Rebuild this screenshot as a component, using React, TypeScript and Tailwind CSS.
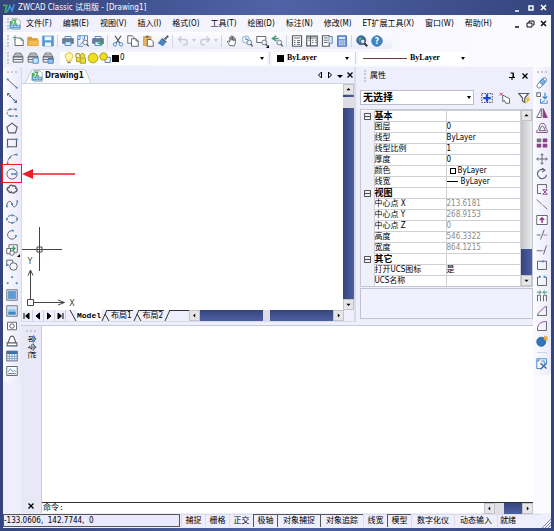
import type { ReactNode } from "react";

const INK = "#575b62";
const BLUE = "#3f86c6";

function Icon({ children, className = "size-3" }: { children: ReactNode; className?: string }) {
  return (
    <svg viewBox="0 0 16 16" className={`${className} shrink-0`} fill="none" stroke={INK} strokeWidth="1.2" aria-hidden="true">
      {children}
    </svg>
  );
}

const dot = (x: number, y: number) => <rect key={`${x}-${y}`} x={x - 1} y={y - 1} width="2.4" height="2.4" fill={BLUE} stroke="none" />;

const printer = (
  <>
    <path d="M4 5V2h8v3" fill="#fff" stroke={BLUE} />
    <rect x="1" y="5" width="14" height="6" fill="#6b7d90" stroke="#5a6c80" />
    <path d="M4 9h8v5H4z" fill="#dcecf9" stroke={BLUE} />
  </>
);

const magnifier = (
  <>
    <circle cx="11" cy="10" r="3.2" fill="#e8f2fb" stroke="#6a7683" />
    <path d="M13.2 12.4 15.5 15" stroke="#555" strokeWidth="1.8" />
  </>
);

const layerStack = (
  <>
    <path d="M4.500 1.500h7l3 5h-13z" fill="#fff" />
    <path d="M4 4h8" />
    <path d="M1.500 6.500h13M1.500 6.500v7h13v-7M1.500 10h13" />
  </>
);

type Tool = { label: string; art: ReactNode; menu?: boolean };

const fileTools: Tool[] = [
  { label: "新建", art: <><path d="M4 5v9h11V7l-3-3H7" fill="#fff" /><path d="M12 4v3h3M1 3.500h6M4 .5v6" stroke="#3d9a6c" /></> },
  { label: "打开", art: <><path d="M1 14V3h5l1.500 2H14v9z" fill="#e0a030" stroke="#d99a2b" /><path d="M1 14l1-7h13v7z" fill="#f3bd55" stroke="#e3a63b" /></> },
  { label: "保存", art: <><path d="M1 1.500h14v13H1z" fill="#5b9ad4" stroke="#4b8bc8" /><path d="M3.500 2h9v5h-9zM4 10h8v4.500H4z" fill="#eef6fd" stroke="none" /></> },
];
const printTools: Tool[] = [
  { label: "打印", art: printer },
  { label: "打印预览", art: <><path d="M1 1h13v9M1 1v14h7M4 1v5H1M7 4l3 3-6 6M10 1v5" stroke={BLUE} fill="none" />{magnifier}</> },
  { label: "发布", art: <>{printer}<path d="M8 11h5M11 8l3.500 3-3.500 3" stroke="#3d9a6c" strokeWidth="2" /></> },
];
const editTools: Tool[] = [
  { label: "剪切", art: <><path d="M4 1l6.500 10M12 1 5.500 11" strokeWidth="1.700" /><circle cx="4" cy="12.500" r="2.300" stroke={BLUE} /><circle cx="12" cy="12.500" r="2.300" stroke={BLUE} /></> },
  { label: "复制", art: <><path d="M1 1h6l2 2v8H1z" fill="#fff" /><path d="M6 5h6l3 3v7H6z" fill="#fff" /><path d="M12 5v3h3" /></> },
  { label: "粘贴", art: <><path d="M2 2h10v12H2z" fill="#eab45a" stroke="#dda246" /><path d="M5 .8h4v3H5z" fill="#777" stroke="none" /><path d="M7 6h5l3 3v6H7z" fill="#fff" /></> },
  { label: "特性匹配", art: <><path d="M15 1 10 6" strokeWidth="2.500" stroke="#56697d" /><path d="m7 4 6 5-2 2-6-5z" fill="#56697d" stroke="none" /><path d="m5 6 6 5-3 4-7-4z" fill={BLUE} stroke="none" /></> },
];
const viewTools: Tool[] = [
  { label: "实时平移", art: <path d="M5 14c-1-2-3-4-3-5.500 1-1 2 0 3 1V3.500c0-1.300 1.800-1.300 1.800 0V7 2c0-1.300 1.900-1.300 1.900 0v5-4c0-1.300 1.900-1.300 1.900 0v5-3c0-1.300 1.900-1 1.900.3V10c0 2-1 3-1.500 4.500z" fill="#fff" /> },
  { label: "实时缩放", art: <><circle cx="6.500" cy="6" r="4.800" fill="#eef6fc" stroke="#7faed6" /><path d="M6.500 3v3h3" stroke={BLUE} />{magnifier}</> },
  { label: "窗口缩放", art: <><path d="M1 2h12v8H1z" fill="#fff" />{magnifier}</>, menu: true },
  { label: "缩放上一个", art: <><path d="M7 1 2 4.500 7 8M2 4.500h8" stroke="#3d9a6c" strokeWidth="2" />{magnifier}</> },
];
const paletteTools: Tool[] = [
  { label: "特性", art: <><path d="M2 1h12v14H2z" fill="#fff" strokeWidth="1.600" /><path d="M4 4h8M4 7.500h2M8 7.500h4M4 10h2M8 10h4M4 12.500h2M8 12.500h4" /></> },
  { label: "设计中心", art: <><path d="M1 1.500h14v13H1zM6 1.500v13" fill="#fff" strokeWidth="1.600" /><path d="M2 4h12M8 7h2M12 7h2M8 10h2M12 10h2M3 7h2" /></> },
  { label: "工具选项板", art: <><path d="M2 1h9v14H2z" fill="#fff" strokeWidth="1.600" /><path d="M11 2h4v9h-4" fill="#dcecf9" stroke={BLUE} /><path d="M4 4h5M4 7h5M4 10h5" /></> },
  { label: "计算器", art: <><path d="M2 1h12v14H2z" fill="#6f95d8" stroke="#4d74bd" /><path d="M4 4h8" stroke="#fff" strokeWidth="2" /><path d="M4 8h8M4 10.500h8M4 13h8" stroke="#fff" strokeDasharray="2 1" /></> },
];
const helpTools: Tool[] = [
  { label: "在线搜索", art: <><circle cx="7" cy="7" r="6" fill="#2f75b8" stroke="#3a5f8c" /><path d="M3 4l4-1 1 3-4 3z" fill="#5cb36b" stroke="none" /><circle cx="9" cy="8.500" r="3" fill="#dcecf9" stroke="#556" /><path d="m11 11 4 4" stroke="#333" strokeWidth="2.500" /></> },
  {
    label: "帮助",
    art: <><circle cx="8" cy="8" r="7" fill="#3f86c6" stroke="#3577b5" /><text x="8" y="12" textAnchor="middle" fill="#fff" stroke="none" className="text-[11px] font-bold">?</text></>,
  },
];

const layerTools: Tool[] = [
  { label: "图层特性", art: layerStack },
  { label: "图层状态", art: <>{layerStack}<path d="M8 8h7v7H8z" fill="#cfe4f7" stroke={BLUE} /></> },
  { label: "上一图层", art: <>{layerStack}<path d="M8 9h7v6H8z" fill="#9fc4e6" stroke={BLUE} /><path d="M8 9h7" stroke="#3a6fa8" strokeWidth="2" /></> },
];

const drawTools: Tool[] = [
  { label: "直线", art: <><path d="M2 3l12 11" />{dot(2, 3)}{dot(14, 14)}</> },
  { label: "构造线", art: <><path d="M2 2l12 12M2 5V2h3M14 11v3h-3" />{dot(5, 5)}{dot(11, 11)}</> },
  { label: "多段线", art: <><path d="M13 3H6C0 3 0 12 6 12h8" strokeDasharray="3 1.500" />{dot(13, 3)}{dot(5, 3)}{dot(6, 12)}{dot(14, 12)}</> },
  { label: "正多边形", art: <path d="M8 1.500 15 7l-2.500 7.500h-9L1 7z" strokeWidth="1.500" /> },
  { label: "矩形", art: <><path d="M2 3h12v10H2z" strokeWidth="1.500" />{dot(2, 13)}{dot(14, 3)}</> },
  { label: "圆弧", art: <><path d="M14 2C7 2 2 7 2 14" strokeDasharray="4 1.500" />{dot(14, 2)}{dot(5, 6)}{dot(2, 14)}</> },
  { label: "圆", art: <><circle cx="8" cy="8" r="6.800" /><path d="M8 8h6" stroke={BLUE} />{dot(8, 8)}{dot(12, 8)}</> },
  { label: "修订云线", art: <path d="M4 11c-4-1-3-5 0-5 0-3 4-4 5-2 3-1 5 1 4 3 3 1 2 5-1 5-1 2-4 2-5 0-1 1-3 1-3-1z" strokeWidth="1.800" /> },
  { label: "样条曲线", art: <><path d="M1 11C1 3 7 3 8 8s6 6 7-3" />{dot(1, 11)}{dot(8, 8)}{dot(15, 4)}</> },
  { label: "椭圆", art: <><ellipse cx="8" cy="8" rx="7" ry="5" strokeDasharray="4 1.500" />{dot(8, 3)}{dot(1, 8)}{dot(15, 8)}{dot(8, 13)}</> },
  { label: "椭圆弧", art: <><path d="M9 2C0 2 0 13 8 13.500c3 0 5-2 5-4" />{dot(9, 2)}{dot(13, 9)}</> },
  { label: "插入块", art: <><path d="M4 1h11v10H4z" fill="#fff" /><path d="M6 6h6M9 3l3 3-3 3" stroke="#3d9a6c" strokeWidth="1.800" /><path d="M1 6h5v7H1z" fill="#fff" /><circle cx="8" cy="12" r="3" fill="#fff" /></>, menu: true },
  { label: "创建块", art: <><path d="M1 8V1.500h8V5M1 8h3" /><circle cx="10" cy="10" r="5" fill="#f4f4fc" />{dot(1, 8)}</> },
  { label: "点", art: <>{dot(8, 4)}{dot(2, 12)}{dot(14, 12)}</> },
  { label: "图案填充", art: <><path d="M1 1h14v14H1z" fill="#e6eef6" stroke="#667" /><path d="M3 3h10v10H3z" fill="#5f9bd0" stroke="#3f7fb8" strokeDasharray="1 1" /></> },
  { label: "渐变色", art: <><path d="M1 1h14v14H1z" fill="#e6eef6" stroke="#667" /><path d="M3 3h10v3H3z" fill="#cfe3f5" stroke="none" /><path d="M3 6h10v3H3z" fill="#8fbce2" stroke="none" /><path d="M3 9h10v4H3z" fill="#3f86c6" stroke="none" /></> },
  { label: "面域", art: <><path d="M2 3h12v10H2z" fill="#fff" /><circle cx="8" cy="8" r="3" /></> },
  { label: "区域覆盖", art: <path d="M3 10 5.500 3C6 1 10 1 10.500 3L13 10M1.500 10.500h13v4h-13z" fill="#fff" strokeWidth="1.400" /> },
  { label: "表格", art: <><path d="M1 1.500h14v13H1z" fill="#fff" /><path d="M1 1.500h14v4H1z" fill="#3a6fa8" stroke="none" /><path d="M1 8.500h14M1 11.500h14M4.500 5v9.500M8 5v9.500M11.500 5v9.500" stroke="#6d9ccc" /></> },
  { label: "图像", art: <><path d="M1 2h14v12H1z" fill="#fff" /><path d="m3 9 3-4 3 4 2-2 2 2" stroke={BLUE} /><path d="M3 11.500h10" /></> },
];

const PLUM = "#8a3f87";
const modifyTools: Tool[] = [
  { label: "删除", art: <><path d="M9 2c3-3 7 1 4 4l-7 8c-3 2-6-1-4-4z" fill="#fff" stroke="#56697d" /><path d="m5 7 4 4 4-5-4-4z" fill="#7fb2de" stroke={BLUE} /></> },
  { label: "复制对象", art: <><path d="M1 1h5v5H1z" /><path d="M12 1v7M9 6l3 3 3-3" stroke={BLUE} strokeWidth="1.600" /><path d="M6 9v6h9v-4M6 15l6-4" stroke={BLUE} /></> },
  { label: "镜像", art: <><path d="M7 2v12H1z" fill="#fff" /><path d="M9.500 2v12H15z" fill={PLUM} stroke={PLUM} /></> },
  { label: "偏移", art: <><path d="M1 14c-1-4 3-3 3-6 0-8 9-8 9-1 0 2 3 4 2 7z" stroke={PLUM} /><path d="M4 11.500c3-1 1-6 4.500-6s1.500 5 4.500 6z" /></> },
  { label: "阵列", art: <><path d="M1 2h6v5H1z" fill="#777" stroke="none" /><path d="M9 2h6v5H9zM1 9h6v5H1zM9 9h6v5H9z" fill={PLUM} stroke="none" /></> },
  { label: "移动", art: <path d="M8 1v14M1 8h14M6 3l2-2 2 2M6 13l2 2 2-2M3 6 1 8l2 2M13 6l2 2-2 2" /> },
  { label: "旋转", art: <path d="M11 2.500C5 0 0 6 3 11s10 4 11-2M8 0l4 3-4 2.500" strokeWidth="1.400" /> },
  { label: "缩放", art: <><path d="M14 7V2H2v12h5" /><path d="M9 9h6M9 9l6 6M15 9l-6 6h6" stroke={PLUM} /></> },
  { label: "拉伸", art: <><path d="M1 2l4 4M11 11l4 4" /><path d="m5 6 6 5" stroke={PLUM} strokeDasharray="2 1" /></> },
  { label: "拉长", art: <><path d="M1 2h14v12H1z" fill="#fff" /><path d="M8 12V5M5 8l3-3 3 3" stroke={PLUM} strokeWidth="2" /></> },
  { label: "修剪", art: <><path d="M1 8h5M6 14l5-13" /><path d="M10 8h5" stroke={PLUM} strokeDasharray="2 1" /></> },
  { label: "延伸", art: <><path d="M1 9h6M10 14l4-12" /><path d="M7 9h5" stroke={PLUM} strokeDasharray="2 1" /></> },
  { label: "打断于点", art: <><path d="M2 3h12v11H2z" />{dot(9, 3)}</> },
  { label: "打断", art: <><path d="M5 3H2v11h12V3h-3" />{dot(5, 2)}{dot(11, 2)}</> },
  { label: "合并", art: <><path d="M2 15V7h4v8M10 15V7h4v8" /><path d="M1 3h5M4 1l3 2-3 2M15 3h-5M12 1 9 3l3 2" stroke="#3d9a6c" /></> },
  { label: "倒角", art: <><path d="M14 2v12H2l1-3" /><path d="m3 11 8-8 3-1" stroke={PLUM} /></> },
  { label: "圆角", art: <><path d="M14 2v12H2v-2" /><path d="M2 12C2 6 6 2 14 2" stroke={PLUM} /></> },
  { label: "分解", art: <><circle cx="7" cy="9" r="6" fill="#2f75b8" stroke="#29669f" /><path d="m12 1 1 2 2-1-1 3 2 1-3 1-2-1z" fill="#eda92c" stroke="#eda92c" /></> },
];

const matchTool: Tool = {
  label: "快速选择",
  art: <><path d="M1 1h13v7M1 1v13h6M4 1v3H1M7 4h4v4" stroke={BLUE} /><path d="m6 7 8 7M14 7l-8 8" stroke="#3a6fa8" strokeWidth="2" /></>,
};

function ToolButton({ tool, className = "" }: { tool: Tool; className?: string }) {
  return (
    <button type="button" aria-label={tool.label} className={`relative flex size-[15px] shrink-0 items-center justify-center ${className}`}>
      <Icon>{tool.art}</Icon>
      {tool.menu && <span className="absolute right-0 bottom-0 border-b-[3px] border-l-[3px] border-b-black border-l-transparent" />}
    </button>
  );
}

function Separator() {
  return <span className="mx-[2px] h-3 w-px shrink-0 bg-[#d4d4e2]" />;
}

function Grip({ vertical = false }: { vertical?: boolean }) {
  return vertical ? (
    <span className="h-3 w-0 shrink-0 border-l-2 border-dotted border-[#c8c8d2]" />
  ) : (
    <span className="h-0 w-[10px] shrink-0 border-t-2 border-dotted border-[#c8c8d2]" />
  );
}

function Caret({ muted = false }: { muted?: boolean }) {
  return (
    <span
      className={`pointer-events-none h-0 w-0 shrink-0 border-x-2 border-t-[3px] border-x-transparent ${muted ? "border-t-[#c9c9d4]" : "border-t-black"}`}
    />
  );
}

function Combo({ label, value, lead, className, textClass }: { label: string; value: string; lead?: ReactNode; className: string; textClass: string }) {
  return (
    <div className={`flex items-center bg-white ${className}`}>
      {lead}
      <select aria-label={label} className={`min-w-0 flex-1 appearance-none bg-transparent outline-none ${textClass}`}>
        <option>{value}</option>
      </select>
      <Caret />
    </div>
  );
}

function Undo({ flip = false }: { flip?: boolean }) {
  return (
    <span className="flex items-center">
      <button type="button" aria-label={flip ? "重做" : "放弃"} className="flex size-[15px] items-center justify-center">
        <Icon className={flip ? "size-3 -scale-x-100" : "size-3"}>
          <path d="M6 2 2 6l4 4M2 6h8c5 0 5 7 0 7H8" stroke="#c9ccd8" strokeWidth="2" />
        </Icon>
      </button>
      <span className="flex w-[7px] justify-center"><Caret muted /></span>
    </span>
  );
}

type Dir = "up" | "down" | "left" | "right";
const arrowPath: Record<Dir, string> = { up: "M2 6 5 3l3 3z", down: "M2 4l3 3 3-3z", left: "M6 2 3 5l3 3z", right: "M4 2l3 3-3 3z" };

function ScrollButton({ dir, label }: { dir: Dir; label: string }) {
  return (
    <button type="button" aria-label={label} className="flex size-[11px] shrink-0 items-center justify-center border border-[#c4c4c8] bg-[#e6e6e8]">
      <svg viewBox="0 0 10 10" className="size-[7px]"><path d={arrowPath[dir]} /></svg>
    </button>
  );
}

const trackV = "bg-linear-to-r from-[#35457c] to-[#4d60a4]";
const trackH = "bg-linear-to-b from-[#35457c] to-[#4d60a4]";

function Logo({ className }: { className: string }) {
  return (
    <svg viewBox="0 0 16 16" className={`${className} shrink-0`} fill="none" aria-hidden="true">
      <path d="M0 4.500h5L3 13h3" stroke="#3fae5a" strokeWidth="2.400" />
      <path d="m6 13 3-8 3 7 3-9" stroke="#3d9be0" strokeWidth="2" />
    </svg>
  );
}

function DocIcon() {
  return (
    <svg viewBox="0 0 16 16" className="size-3 shrink-0" fill="none" aria-hidden="true">
      <path d="M4 1h8l3 3v11H4z" fill="#fff" stroke="#8a95a5" />
      <path d="M5 3h4L7 8h4" stroke="#4cb04f" strokeWidth="2" />
      <path d="M2 4v10M2 8l3-3" stroke="#3fae5a" strokeWidth="2" />
      <path d="M1 9h14v5H1z" fill="#4d94cf" />
      <path d="M3 12.500v-2h2v2M7 12.500v-2h2v2M11 12.500v-2h2v2" stroke="#fff" strokeWidth=".8" />
    </svg>
  );
}

const menus = ["文件(F)", "编辑(E)", "视图(V)", "插入(I)", "格式(O)", "工具(T)", "绘图(D)", "标注(N)", "修改(M)", "ET扩展工具(X)", "窗口(W)", "帮助(H)"];

type Row = { name: string; value?: string; group?: boolean; muted?: boolean; mark?: ReactNode };
const rows: Row[] = [
  { name: "基本", group: true },
  { name: "图层", value: "0" },
  { name: "线型", value: "ByLayer" },
  { name: "线型比例", value: "1" },
  { name: "厚度", value: "0" },
  { name: "颜色", value: "ByLayer", mark: <span className="mr-[2px] ml-[3px] inline-block size-[6px] border border-black align-middle" /> },
  { name: "线宽", value: "ByLayer", mark: <span className="mr-[3px] inline-block h-px w-[11px] bg-black align-middle" /> },
  { name: "视图", group: true },
  { name: "中心点 X", value: "213.6181", muted: true },
  { name: "中心点 Y", value: "268.9153", muted: true },
  { name: "中心点 Z", value: "0", muted: true },
  { name: "高度", value: "546.3322", muted: true },
  { name: "宽度", value: "864.1215", muted: true },
  { name: "其它", group: true },
  { name: "打开UCS图标", value: "是" },
  { name: "UCS名称", value: "" },
];

const modes = [
  { name: "捕捉", on: false }, { name: "栅格", on: false }, { name: "正交", on: false }, { name: "极轴", on: true },
  { name: "对象捕捉", on: true }, { name: "对象追踪", on: true }, { name: "线宽", on: false }, { name: "模型", on: true },
  { name: "数字化仪", on: false }, { name: "动态输入", on: false },
];

function WindowButtons({ stroke }: { stroke: string }) {
  const restore = stroke !== "#fff";
  const arts: [string, ReactNode][] = [
    ["最小化", <path key="a" d="M2 8h4" />],
    ["还原", restore ? <path key="b" d="M3 4V2h5v4H7M1 4h5v4H1z" strokeWidth="1" /> : <path key="b" d="M3 3h4v4H3z" />],
    ["关闭", <path key="c" d="m2 2 5 5M7 2 2 7" />],
  ];
  return (
    <div className="flex gap-1">
      {arts.map(([label, art]) => (
        <button key={label} type="button" aria-label={label} className="flex size-[9px] items-center justify-center">
          <svg viewBox="0 0 9 9" className="size-[9px]" fill="none" stroke={stroke} strokeWidth="1.500">{art}</svg>
        </button>
      ))}
    </div>
  );
}

function Cross() {
  return <svg viewBox="0 0 8 8" className="size-2" stroke="#000" strokeWidth="1.300"><path d="m1.500 1.500 5 5M6.500 1.500l-5 5" /></svg>;
}

function ToolColumn({ tools, className, label, children }: { tools: Tool[]; className: string; label: string; children?: ReactNode }) {
  return (
    <div role="toolbar" aria-label={label} className="flex w-[18px] shrink-0 flex-col items-center self-start rounded-b bg-linear-to-r from-[#fbfbff] to-[#eaeafa] pt-[4px] pb-1">
      <Grip />
      <div className={`mt-[2px] flex flex-col justify-between ${className}`}>
        {tools.map((t) =>
          t.label === "圆" ? (
            <div key={t.label} className="relative">
              <ToolButton tool={t} />
              <div className="pointer-events-none absolute top-[-2px] left-[-3px] z-10 flex items-center">
                <span className="h-[19px] w-5 border border-[#ee1c25]" />
                <svg viewBox="0 0 54 12" className="h-3 w-[54px]" aria-hidden="true">
                  <path d="M0 6 11 1v10z" fill="#ee1c25" />
                  <path d="M10 6h43" stroke="#ee1c25" strokeWidth="1.400" />
                </svg>
              </div>
            </div>
          ) : (
            <ToolButton key={t.label} tool={t} />
          ),
        )}
      </div>
      {children}
    </div>
  );
}

function DrawingPanel() {
  return (
    <section aria-label="Drawing1" className="flex min-w-0 flex-1 flex-col border-r-2 border-b border-l border-[#d7dce6]">
      <div className="flex h-[17px] shrink-0 items-end border-b border-[#ccd4dc]">
        <button type="button" className="relative ml-[3px] flex h-[14px] w-[66px] items-center gap-[2px] pl-[6px] text-[8px] leading-3 font-bold text-[#111]">
          <svg viewBox="0 0 66 14" preserveAspectRatio="none" className="absolute inset-0 size-full" aria-hidden="true">
            <path d="M0 14 7 1Q8 .5 9 .5H58Q60 .5 61 2L66 14" fill="#fbfbff" stroke="#c5ccd4" />
          </svg>
          <span className="relative"><DocIcon /></span>
          <span className="relative">Drawing1</span>
        </button>
        <div className="mb-1 ml-auto flex gap-[2px]">
          <button type="button" aria-label="上一个"><svg viewBox="0 0 8 8" className="size-2" fill="none" stroke="#000"><path d="M5.500 1v6L2.500 4z" /></svg></button>
          <button type="button" aria-label="下一个"><svg viewBox="0 0 8 8" className="size-2" fill="none" stroke="#000"><path d="M2.500 1v6l3-3z" /></svg></button>
          <button type="button" aria-label="列表"><svg viewBox="0 0 8 8" className="size-2"><path d="M1 4h6L4 7z" /></svg></button>
          <button type="button" aria-label="关闭图形"><Cross /></button>
        </div>
      </div>
      <div className="flex min-h-0 flex-1">
        <div className="flex flex-1 items-end bg-white">
          <svg viewBox="0 0 60 84" className="h-[84px] w-[60px]" fill="none" stroke="#444" aria-hidden="true">
            <path d="M0 23.500h40M17.500 1v44M15 21h5v5h-5z" />
            <path d="M8.500 73V45M6 49.500 8.500 44l2.500 5.500M11.500 76.500H42M36 74l6.500 2.500L36 79M5.500 73.500h6v6h-6z" />
            <text x="8" y="38" textAnchor="middle" fill="#444" stroke="none" className="text-[9px]">Y</text>
            <text x="50" y="80" textAnchor="middle" fill="#444" stroke="none" className="text-[9px]">X</text>
          </svg>
        </div>
        <div className="flex w-[11px] flex-col">
          <ScrollButton dir="up" label="向上滚动" />
          <span className={`h-[2px] ${trackV}`} />
          <span className="h-[11px] bg-[#dedee2]" />
          <span className={`flex-1 ${trackV}`} />
          <ScrollButton dir="down" label="向下滚动" />
        </div>
      </div>
      <div className="flex h-[11px] shrink-0 items-center pr-[10px]">
        <div className="flex">
          {["M2 2v6M7 2 3.500 5 7 8z", "M6.500 2 3 5l3.500 3z", "M3.500 2 7 5 3.500 8z", "M8 2v6M3 2l3.500 3L3 8z"].map((d, i) => (
            <button key={d} type="button" aria-label={["第一个布局", "上一布局", "下一布局", "最后布局"][i]} className="size-[11px] border-r border-[#d0d0dc]">
              <svg viewBox="0 0 10 10" className="size-[10px]" stroke="#000"><path d={d} fill="#000" /></svg>
            </button>
          ))}
        </div>
        <div className="flex h-full flex-1 items-center text-[8px] leading-[11px]">
          <svg viewBox="0 0 10 11" className="ml-px h-[11px] w-[10px]" fill="none" stroke="#333"><path d="m3 0 6 11" /></svg>
          <button type="button" className="bg-white font-['Liberation_Mono','Noto_Sans_CJK_SC',monospace] font-bold">Model</button>
          {["布局1", "布局2"].map((t) => (
            <span key={t} className="flex h-full items-center">
              <svg viewBox="0 0 9 11" className="h-[11px] w-[9px]" fill="none" stroke="#333"><path d="M1 11 6 0M4 4l4 7M6 .5h3" /></svg>
              <button type="button" className="h-full border-t border-[#333] px-px leading-[10px]">{t}</button>
            </span>
          ))}
          <svg viewBox="0 0 9 11" className="h-[11px] w-[9px]" fill="none" stroke="#333"><path d="M1 11 6 0M5 .5h4" /></svg>
          <span className="h-full flex-1 border-t border-[#333]" />
        </div>
        <div className="flex w-[155px] shrink-0">
          <ScrollButton dir="left" label="向左滚动" />
          <span className={`flex-1 ${trackH}`} />
          <span className="w-[7px] bg-[#dedee2]" />
          <span className={`flex-1 ${trackH}`} />
          <ScrollButton dir="right" label="向右滚动" />
        </div>
      </div>
    </section>
  );
}

function PropertiesPanel() {
  return (
    <aside aria-label="属性" className="flex w-[177px] shrink-0 flex-col pl-[4px]">
      <div className="flex h-[17px] items-center gap-1 pl-1">
        <Grip vertical />
        <h2 className="flex-1 text-[8px] leading-3">属性</h2>
        <button type="button" aria-label="固定" className="mr-px">
          <svg viewBox="0 0 8 8" className="size-2" fill="none" stroke="#000"><path d="M2.500 1h3v4M5 1v4M1 5.500h6M4 5.500V8" /></svg>
        </button>
        <button type="button" aria-label="关闭属性" className="mr-1"><Cross /></button>
      </div>
      <div className="mt-[6px] flex items-center">
        <Combo label="选择集" value="无选择" className="h-[15px] w-[114px] border border-[#b9bfca] pr-[2px]" textClass="pl-[2px] text-[10px] leading-3 font-bold" />
        <div className="flex flex-1 justify-around pl-1">
          <button type="button" aria-label="快速选择对象" className="size-3">
            <Icon><path d="M1 2h14v12H1z" stroke="#334" strokeDasharray="2 1.500" /><path d="M8 3v10M3 8h10" stroke="#1648e0" strokeWidth="3" /></Icon>
          </button>
          <button type="button" aria-label="选择对象" className="size-3">
            <Icon><path d="m1 1 4 4M5 1 1 5" stroke="#c33" /><path d="M5 4v9l2-2 2 4h5V9z" fill="#fff" /></Icon>
          </button>
          <button type="button" aria-label="过滤" className="size-3">
            <Icon><path d="M1 2h13L9 8v6l-3-2V8z" fill="#fff" strokeWidth="1.600" /><path d="m14 6-4 5h3l-2 4 5-6h-3z" fill="#f2c81e" stroke="#e5b50b" strokeWidth=".6" /></Icon>
          </button>
        </div>
      </div>
      <div className="mt-1 flex h-[178px] overflow-hidden border border-[#c3c8d2] bg-white">
        <table className="flex-1 table-fixed border-collapse text-[8px] leading-[10px]">
          <colgroup><col className="w-[13px]" /><col className="w-[72px]" /><col /></colgroup>
          <tbody>
            {rows.map((r) => (
              <tr key={r.name} className="h-[11px]">
                <td className="bg-[#f0f0fa] p-0 text-center">
                  {r.group && (
                    <svg viewBox="0 0 8 8" className="mx-auto size-[7px]" fill="none" stroke="#333"><path d="M.5.5h7v7h-7zM1 4h6" /></svg>
                  )}
                </td>
                <th scope="row" className={`border border-[#cfcfd4] p-0 text-left whitespace-nowrap ${r.group ? "text-[9px] font-bold" : "font-normal"}`}>{r.name}</th>
                <td className={`border border-[#cfcfd4] p-0 whitespace-nowrap ${r.muted ? "text-[#8c8c8c]" : ""}`}>{r.mark}{r.value}</td>
              </tr>
            ))}
          </tbody>
        </table>
        <div className="flex w-[11px] flex-col">
          <ScrollButton dir="up" label="属性向上滚动" />
          <span className="flex-1 bg-linear-to-r from-[#c6c6ca] to-[#ececee]" />
          <span className={`h-[26px] ${trackV}`} />
          <ScrollButton dir="down" label="属性向下滚动" />
        </div>
      </div>
      <div className="mt-px h-[31px] border border-[#bfc4d2] bg-[#f0f0fe]" />
    </aside>
  );
}

function CommandPanel() {
  return (
    <section aria-label="命令栏" className="flex min-h-0 flex-1 border-t border-[#c5ccd4]">
      <div className="flex w-5 shrink-0 flex-col items-center bg-[#e8e8f6] pt-1">
        <Grip />
        <h2 className="mt-[3px] text-[8px] leading-[10px] [text-orientation:sideways] [writing-mode:vertical-rl]">命令栏</h2>
        <button type="button" aria-label="关闭命令栏" className="mt-auto mb-[3px]"><Cross /></button>
      </div>
      <div className="flex min-w-0 flex-1 flex-col border-l border-[#c5ccd4] bg-white">
        <textarea aria-label="命令历史" readOnly className="min-h-0 flex-1 resize-none outline-none" />
        <div className="flex h-[11px] shrink-0 items-center border-t border-[#333] text-[8px] leading-[10px]">
          <label htmlFor="command" className="pl-px font-['Liberation_Mono','Noto_Sans_CJK_SC',monospace]">命令:</label>
          <input id="command" className="h-[9px] min-w-0 flex-1 px-1 outline-none" />
          <div className="flex w-[49px]">
            <ScrollButton dir="left" label="命令向左滚动" />
            <span className="w-[9px] bg-[#dedee2]" />
            <span className={`flex-1 ${trackH}`} />
            <ScrollButton dir="right" label="命令向右滚动" />
          </div>
        </div>
      </div>
    </section>
  );
}

export default function App() {
  return (
    <div className="flex h-screen flex-col bg-linear-to-r from-[#34447c] via-[#5063a6] to-[#34447c] px-[3px] pb-[3px] font-['DejaVu_Sans_Condensed','Noto_Sans_CJK_SC',sans-serif] text-black">
      <header className="flex h-[15px] shrink-0 items-center gap-[3px] text-[8px] leading-3 text-white">
        <Logo className="size-3" />
        <h1 className="flex-1">ZWCAD Classic 试用版 - [Drawing1]</h1>
        <div className="pr-[3px]"><WindowButtons stroke="#fff" /></div>
      </header>

      <div className="flex min-h-0 flex-1 flex-col bg-[#eeeefc]">
        <div className="bg-linear-to-r from-[#f0f0fd] to-[#fbfbff]">
          <nav aria-label="主菜单" className="flex h-[17px] items-center pl-[4px]">
            <Grip vertical />
            <DocIcon />
            <div className="flex flex-1 gap-[11px] pl-[5px] text-[8px] leading-3">
              {menus.map((m) => <button key={m} type="button" className="whitespace-nowrap">{m}</button>)}
            </div>
            <div className="pr-[3px]"><WindowButtons stroke="#111" /></div>
          </nav>

          <div role="toolbar" aria-label="标准" className="flex h-[17px] w-fit items-center rounded-r bg-linear-to-b from-[#fdfdff] to-[#ececfa] pr-2 pl-[4px]">
            <Grip vertical />
            <span className="w-px" />
            {fileTools.map((t) => <ToolButton key={t.label} tool={t} />)}
            <Separator />
            {printTools.map((t) => <ToolButton key={t.label} tool={t} />)}
            <Separator />
            {editTools.map((t) => <ToolButton key={t.label} tool={t} />)}
            <Separator />
            <Undo />
            <Undo flip />
            <Separator />
            {viewTools.map((t) => <ToolButton key={t.label} tool={t} />)}
            <Separator />
            {paletteTools.map((t) => <ToolButton key={t.label} tool={t} />)}
            <Separator />
            {helpTools.map((t) => <ToolButton key={t.label} tool={t} />)}
          </div>

          <div role="toolbar" aria-label="图层" className="flex h-[18px] items-center pl-[4px]">
            <Grip vertical />
            <span className="w-px" />
            {layerTools.map((t) => <ToolButton key={t.label} tool={t} />)}
            <Combo
              label="图层"
              value="0"
              className="ml-[5px] h-[13px] w-[207px] pr-[3px] pl-[3px]"
              textClass="pl-px text-[8px] leading-3"
              lead={
                <>
                  <Icon><path d="M5 10C1 6 3 1 8 1s7 5 3 9v2H5z" fill="#fff6a8" stroke="#d8b92a" /><path d="M6 14h4" strokeWidth="2" stroke="#777" /></Icon>
                  <Icon><path d="M1 7V4c0-3 5-3 5 0v1" stroke="#a59a1c" strokeWidth="1.600" /><path d="M2 7h6v6H2z" fill="#e8dc3a" stroke="#a59a1c" /><path d="M7 8V4c0-3 6-3 6 0v3M7 8h7v7H7z" fill="#e8dc3a" stroke="#a59a1c" /></Icon>
                  <Icon><circle cx="8" cy="8" r="6.500" fill="#f0de1c" stroke="#a89a1d" /></Icon>
                  <Icon><path d="M8 7h7v7H8z" fill="#eef4fb" stroke="#4f7cb0" /><circle cx="6" cy="6" r="5" fill="#f0de1c" stroke="#a89a1d" /></Icon>
                  <span className="ml-px size-[7px] shrink-0 bg-black" />
                </>
              }
            />
            <Separator />
            <Combo
              label="颜色"
              value="ByLayer"
              className="h-[13px] w-[81px] pr-1 pl-[5px]"
              textClass="pl-[3px] font-['Liberation_Serif',serif] text-[8px] leading-3 font-bold"
              lead={<span className="size-[7px] shrink-0 bg-black" />}
            />
            <Separator />
            <Combo
              label="线型"
              value="ByLayer"
              className="h-[13px] w-[110px] pr-[3px] pl-[5px]"
              textClass="pl-[3px] font-['Liberation_Serif',serif] text-[8px] leading-3 font-bold"
              lead={<span className="h-px w-11 shrink-0 bg-[#6b3a3f]" />}
            />
          </div>
        </div>

        <main className="flex min-h-0 flex-1">
          <ToolColumn label="绘图" tools={drawTools} className="h-[304px]" />
          <div className="flex min-w-0 flex-1 flex-col">
            <div className="flex h-[255px] shrink-0">
              <DrawingPanel />
              <PropertiesPanel />
            </div>
            <div className="h-[3px] shrink-0" />
            <CommandPanel />
          </div>
          <div className="bg-[#fafaff]">
            <ToolColumn label="修改" tools={modifyTools} className="h-[274px]">
              <span className="my-[3px] h-px w-[10px] bg-[#d4d4e2]" />
              <ToolButton tool={matchTool} />
            </ToolColumn>
          </div>
        </main>

        <footer className="flex h-[15px] shrink-0 items-center text-[8px] leading-3">
          <output className="h-[13px] w-[177px] shrink-0 border border-[#555] bg-[#eaeafc] whitespace-pre">-133.0606,  142.7744,  0</output>
          <div className="flex pl-px">
            {modes.map((m) => (
              <button
                key={m.name}
                type="button"
                aria-pressed={m.on}
                className={`h-[13px] border-t border-l whitespace-nowrap ${m.name.length > 2 ? "w-[43px]" : "w-6"} ${m.on ? "border-[#555]" : "border-[#dcdce8]"}`}
              >
                {m.name}
              </button>
            ))}
          </div>
          <span className="h-[13px] flex-1 border-t border-l border-[#dcdce8] pl-[2px]">就绪</span>
          <svg viewBox="0 0 10 10" className="size-[10px] self-end" stroke="#7a86b4" aria-hidden="true"><path d="M1 10 10 1M4 10l6-6M7 10l3-3" /></svg>
        </footer>
      </div>
    </div>
  );
}
